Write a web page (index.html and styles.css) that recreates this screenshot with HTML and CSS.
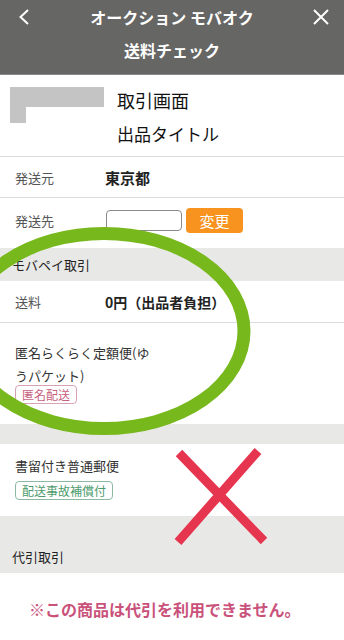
FILE: index.html
```html
<!DOCTYPE html>
<html lang="ja">
<head>
<meta charset="utf-8">
<title>送料チェック</title>
<link rel="stylesheet" href="styles.css">
</head>
<body>
<div class="page">
  <header class="appbar">
    <div class="appbar-top">
      <span class="appbar-icon back">
        <svg width="12" height="16" viewBox="0 0 12 16"><path d="M10 1 L2.5 8 L10 15" fill="none" stroke="#fff" stroke-width="2"/></svg>
      </span>
      <span class="appbar-title">オークション モバオク</span>
      <span class="appbar-icon close">
        <svg width="16" height="16" viewBox="0 0 16 16"><path d="M1 1 L15 15 M15 1 L1 15" fill="none" stroke="#fff" stroke-width="2"/></svg>
      </span>
    </div>
    <div class="appbar-sub">送料チェック</div>
  </header>

  <section class="product">
    <svg class="product-thumb" width="94" height="36" viewBox="0 0 94 36"><path d="M0 0 H94 V20 H16 V36 H0 Z" fill="#c4c4c4"/></svg>
    <div class="product-text">
      <div class="product-line1">取引画面</div>
      <div class="product-line2">出品タイトル</div>
    </div>
  </section>

  <div class="row row-from">
    <span class="row-label">発送元</span>
    <span class="row-value">東京都</span>
  </div>
  <div class="row row-to">
    <span class="row-label">発送先</span>
    <span class="to-input"></span>
    <span class="btn-change">変更</span>
  </div>

  <div class="section">モバペイ取引</div>
  <div class="row row-fee">
    <span class="row-label">送料</span>
    <span class="row-value">0円（出品者負担）</span>
  </div>
  <div class="method method-anon">
    <div class="method-name">匿名らくらく定額便(ゆうパケット)</div>
    <span class="tag tag-pink">匿名配送</span>
  </div>
  <div class="spacer spacer-a"></div>
  <div class="method method-reg">
    <div class="method-name">書留付き普通郵便</div>
    <span class="tag tag-green">配送事故補償付</span>
  </div>
  <div class="spacer spacer-b"></div>
  <div class="section">代引取引</div>
  <div class="notice">※この商品は代引を利用できません。</div>

  <svg class="annot" width="344" height="640" viewBox="0 0 344 640">
    <ellipse cx="104" cy="331" rx="140" ry="97.5" fill="none" stroke="#77b81c" stroke-width="13"/>
    <path d="M179 453 L264 541 M258 451 L178 542" fill="none" stroke="#e6354e" stroke-width="9"/>
  </svg>
</div>
</body>
</html>
```

FILE: styles.css
```css
* { box-sizing: border-box; }
html, body { margin: 0; padding: 0; background: #fff; }
body {
  font-family: "Noto Sans CJK JP", "Noto Sans", sans-serif;
  color: #222;
}
.page {
  position: relative;
  width: 344px;
  height: 640px;
  overflow: hidden;
  background: #fff;
}
.appbar {
  background: #666665;
  height: 75px;
  color: #fff;
  border-bottom: 1px solid #8a8a8a;
}
.appbar-top {
  display: grid;
  grid-template-columns: 48px 1fr 48px;
  align-items: center;
  height: 33px;
}
.appbar-icon { display: flex; align-items: center; height: 16px; }
.appbar-icon.back { padding-left: 18px; }
.appbar-icon.close { justify-content: flex-end; padding-right: 15px; }
.appbar-title {
  text-align: center;
  font-size: 16px;
  font-weight: bold;
  line-height: 20px;
}
.appbar-sub {
  height: 34px;
  line-height: 34px;
  text-align: center;
  font-size: 16px;
  font-weight: bold;
}
.product {
  display: flex;
  align-items: flex-start;
  gap: 13px;
  height: 82px;
  padding: 9px 0 0 10px;
  border-bottom: 1px solid #dcdcdc;
}
.product-thumb { margin-top: 3px; flex: none; }
.product-text { line-height: 33px; color: #111; }
.product-line1 { font-size: 18px; }
.product-line2 { font-size: 17px; }
.row {
  display: flex;
  align-items: center;
  padding-left: 15px;
}
.row-label {
  width: 90px;
  flex: none;
  font-size: 13px;
  color: #555;
}
.row-value {
  font-size: 15px;
  font-weight: 600;
  color: #222;
}
.row-from { height: 41px; border-bottom: 1px solid #dcdcdc; }
.row-to { height: 50px; padding-bottom: 5px; }
.to-input {
  width: 76px;
  height: 21px;
  border: 1px solid #8a8a8a;
  border-radius: 4px;
  margin-left: 1px;
  background: #fff;
}
.btn-change {
  margin-left: 4px;
  width: 57px;
  height: 25px;
  line-height: 25px;
  border-radius: 4px;
  background: #f7931e;
  color: #fff;
  font-size: 15px;
  text-align: center;
}
.section {
  display: flex;
  align-items: center;
  height: 33px;
  padding-left: 12px;
  background: #e8e8e6;
  font-size: 13px;
  color: #222;
}
.row-fee { height: 42px; border-bottom: 1px solid #dcdcdc; }
.row-fee .row-value { font-size: 14px; }
.method {
  display: flex;
  flex-direction: column;
  align-items: flex-start;
  padding-left: 15px;
}
.method-name {
  font-size: 13px;
  line-height: 23px;
  color: #333;
}
.method-anon { height: 101px; padding-top: 18px; }
.method-anon .method-name { width: 140px; }
.method-anon .tag { margin-top: -2px; }
.method-reg { height: 72px; padding-top: 10px; }
.method-reg .tag { margin-top: 4px; }
.tag {
  display: block;
  font-size: 12px;
  line-height: 17px;
  padding: 0 6px;
  border: 1px solid;
  border-radius: 4px;
}
.tag-pink { color: #c8607e; border-color: #d7a3b3; }
.tag-green { color: #4c9b6c; border-color: #8db9a2; }
.spacer { background: #e8e8e6; }
.spacer-a { height: 20px; }
.spacer-b { height: 24px; }
.notice {
  padding: 24px 0 0 29px;
  font-size: 16px;
  line-height: 24px;
  font-weight: bold;
  color: #c9517a;
}
.annot {
  position: absolute;
  top: 0;
  left: 0;
  pointer-events: none;
}
```
